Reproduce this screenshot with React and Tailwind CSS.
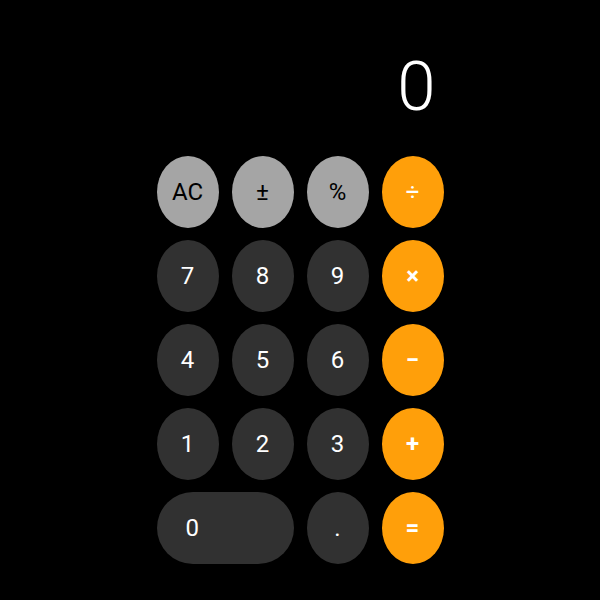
import React from "react";

const rows = [
  [["AC", "g"], ["±", "g"], ["%", "g"], ["÷", "o"]],
  [["7", "d"], ["8", "d"], ["9", "d"], ["×", "ob"]],
  [["4", "d"], ["5", "d"], ["6", "d"], ["−", "ob"]],
  [["1", "d"], ["2", "d"], ["3", "d"], ["+", "ob"]],
];

const cls = {
  g: "bg-[#a5a5a5] text-black",
  d: "bg-[#313131] text-white",
  o: "bg-[#ff9f0a] text-white",
  ob: "bg-[#ff9f0a] text-white font-bold",
};

function Btn({ label, kind, wide }) {
  return (
    <div
      className={`${cls[kind]} h-[72px] rounded-[50%] flex items-center text-[24px] leading-none ${
        wide ? "col-span-2 rounded-full justify-start pl-[29px]" : "justify-center"
      }`}
    >
      {label}
    </div>
  );
}

export default function App() {
  return (
    <div
      className="w-[600px] h-[600px] bg-black flex flex-col items-center"
      style={{ fontFamily: "Roboto, 'Liberation Sans', sans-serif" }}
    >
      <div className="w-[287px] flex justify-end pr-[8px] pt-[52px] h-[156px]">
        <span className="text-white text-[69px] font-light leading-none">0</span>
      </div>
      <div className="grid grid-cols-[repeat(4,62px)] gap-x-[13px] gap-y-[12px]">
        {rows.flat().map(([l, k], i) => (
          <Btn key={i} label={l} kind={k} />
        ))}
        <Btn label="0" kind="d" wide />
        <Btn label="." kind="d" />
        <Btn label="=" kind="ob" />
      </div>
    </div>
  );
}
